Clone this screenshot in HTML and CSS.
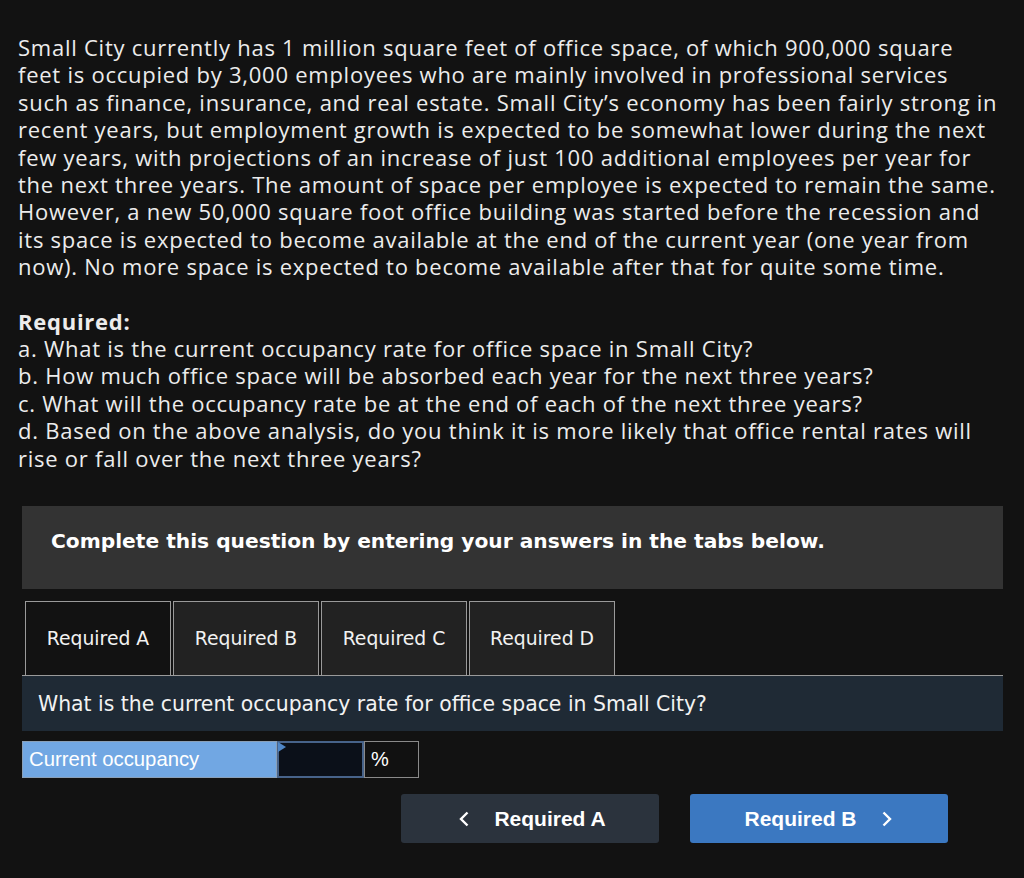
FILE: index.html
```html
<!DOCTYPE html>
<html lang="en">
<head>
<meta charset="utf-8">
<title>Small City office space</title>
<link rel="stylesheet" href="styles.css">
</head>
<body>
<main class="page">
  <section class="problem">
    <p class="intro">Small City currently has 1 million square feet of office space, of which 900,000 square feet is occupied by 3,000 employees who are mainly involved in professional services such as finance, insurance, and real estate. Small City’s economy has been fairly strong in recent years, but employment growth is expected to be somewhat lower during the next few years, with projections of an increase of just 100 additional employees per year for the next three years. The amount of space per employee is expected to remain the same. However, a new 50,000 square foot office building was started before the recession and its space is expected to become available at the end of the current year (one year from now). No more space is expected to become available after that for quite some time.</p>
    <p class="required">
      <strong>Required:</strong><br>
      a. What is the current occupancy rate for office space in Small City?<br>
      b. How much office space will be absorbed each year for the next three years?<br>
      c. What will the occupancy rate be at the end of each of the next three years?<br>
      d. Based on the above analysis, do you think it is more likely that office rental rates will rise or fall over the next three years?
    </p>
  </section>

  <section class="work">
    <div class="banner">Complete this question by entering your answers in the tabs below.</div>

    <div class="tabs">
      <div class="tab active">Required A</div>
      <div class="tab">Required B</div>
      <div class="tab">Required C</div>
      <div class="tab">Required D</div>
    </div>

    <div class="prompt">What is the current occupancy rate for office space in Small City?</div>

    <div class="answer-row">
      <div class="answer-label">Current occupancy</div>
      <div class="answer-input"><span class="flag"></span></div>
      <div class="answer-unit">%</div>
    </div>

    <div class="nav">
      <button class="nav-btn prev">
        <svg class="chev" width="10" height="16" viewBox="0 0 10 16"><polyline points="8.5,1.5 2,8 8.5,14.5" fill="none" stroke="#ffffff" stroke-width="2.4"/></svg>
        <span>Required A</span>
      </button>
      <button class="nav-btn next">
        <span>Required B</span>
        <svg class="chev" width="10" height="16" viewBox="0 0 10 16"><polyline points="1.5,1.5 8,8 1.5,14.5" fill="none" stroke="#ffffff" stroke-width="2.4"/></svg>
      </button>
    </div>
  </section>
</main>
</body>
</html>
```

FILE: styles.css
```css
* { box-sizing: border-box; }

html, body {
  margin: 0;
  padding: 0;
  background: #121212;
}

.page {
  padding: 34px 0 0 0;
}

.problem {
  padding: 0 23px 0 18px;
  color: #ececec;
  font-family: "Open Sans", "Lato", sans-serif;
  font-size: 22px;
  letter-spacing: 0.75px;
  line-height: 27.4px;
}

.problem p {
  margin: 0;
}

.intro {
  margin-bottom: 27px !important;
}

.required strong {
  font-weight: 700;
}

.work {
  margin: 34px 21px 0 22px;
}

.banner {
  height: 83px;
  background: #333333;
  color: #ffffff;
  font-family: "DejaVu Sans", Verdana, sans-serif;
  font-weight: 700;
  font-size: 20.2px;
  padding: 23px 0 0 29px;
}

.tabs {
  display: flex;
  gap: 2px;
  margin-top: 12px;
  padding-left: 3px;
  border-bottom: 1px solid #9a9a9a;
}

.tab {
  width: 146px;
  height: 74px;
  border: 1px solid #9a9a9a;
  border-bottom: none;
  background: #222222;
  color: #f2f2f2;
  font-family: "DejaVu Sans", Verdana, sans-serif;
  font-size: 18.8px;
  display: flex;
  align-items: center;
  justify-content: center;
}

.tab.active {
  background: #121212;
}

.prompt {
  height: 55px;
  background: #1f2a35;
  color: #f2f2f2;
  font-family: "DejaVu Sans", Verdana, sans-serif;
  font-size: 20.4px;
  display: flex;
  align-items: center;
  padding-left: 16px;
}

.answer-row {
  display: flex;
  margin-top: 10px;
  height: 37px;
}

.answer-label {
  width: 255px;
  background: #71a7e3;
  border: 1px solid #8aa0b8;
  color: #ffffff;
  font-family: "Liberation Sans", Arial, sans-serif;
  font-size: 20.3px;
  display: flex;
  align-items: center;
  padding-left: 6px;
}

.answer-input {
  position: relative;
  width: 87px;
  background: #0b1019;
  border: 2px solid #47638a;
}

.flag {
  position: absolute;
  top: -1px;
  left: -1px;
  width: 0;
  height: 0;
  border-top: 5px solid transparent;
  border-bottom: 5px solid transparent;
  border-left: 8px solid #4f86c6;
}

.answer-unit {
  width: 55px;
  background: #111111;
  border: 1px solid #8a8a8a;
  color: #ffffff;
  font-family: "Liberation Sans", Arial, sans-serif;
  font-size: 20px;
  display: flex;
  align-items: center;
  padding-left: 6px;
}

.nav {
  display: flex;
  justify-content: flex-end;
  gap: 31px;
  margin-top: 16px;
  padding-right: 55px;
}

.nav-btn {
  width: 258px;
  height: 49px;
  border: none;
  border-radius: 3px;
  color: #ffffff;
  font-family: "Liberation Sans", Arial, sans-serif;
  font-weight: 700;
  font-size: 21px;
  display: flex;
  align-items: center;
  justify-content: center;
  gap: 25px;
  padding: 0;
}

.prev {
  background: #2b333d;
  padding-left: 5px;
}

.next {
  background: #3b78c1;
  padding-right: 2px;
}
```
